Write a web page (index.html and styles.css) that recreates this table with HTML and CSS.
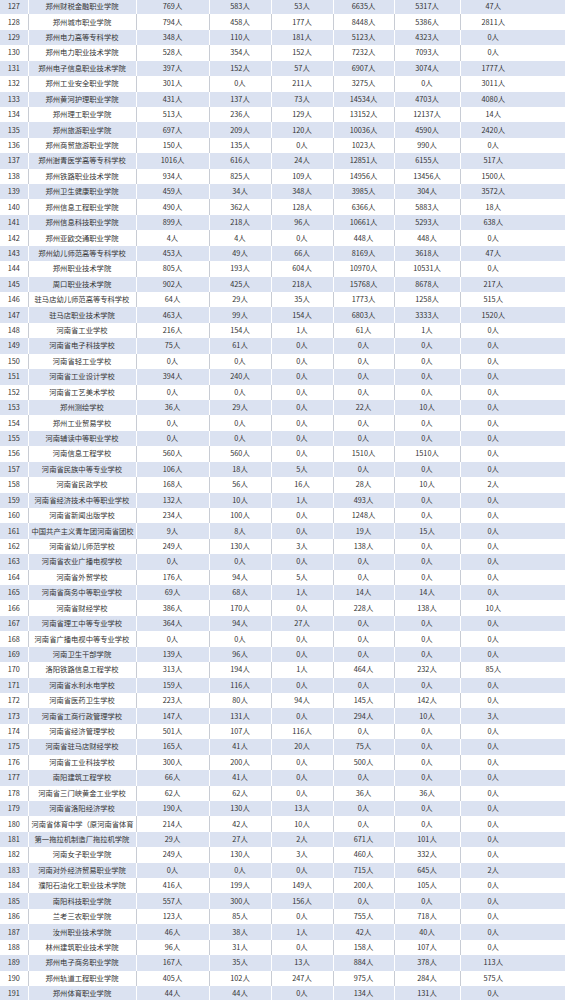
FILE: index.html
```html
<!DOCTYPE html>
<html lang="zh-CN">
<head>
<meta charset="utf-8">
<title>学校统计表</title>
<link rel="stylesheet" href="styles.css">
</head>
<body>
<table class="data">
<colgroup>
<col class="c-no"><col class="c-name"><col class="c-n1"><col class="c-n2"><col class="c-n3"><col class="c-n4"><col class="c-n5"><col class="c-n6"><col class="c-fill">
</colgroup>
<tbody>
<tr class="b"><td>127</td><td>郑州财税金融职业学院</td><td>769人</td><td>583人</td><td>53人</td><td>6635人</td><td>5317人</td><td>47人</td><td class="fill"></td></tr>
<tr><td>128</td><td>郑州城市职业学院</td><td>794人</td><td>458人</td><td>177人</td><td>8448人</td><td>5386人</td><td>2811人</td><td class="fill"></td></tr>
<tr class="b"><td>129</td><td>郑州电力高等专科学校</td><td>348人</td><td>110人</td><td>181人</td><td>5123人</td><td>4323人</td><td>0人</td><td class="fill"></td></tr>
<tr><td>130</td><td>郑州电力职业技术学院</td><td>528人</td><td>354人</td><td>152人</td><td>7232人</td><td>7093人</td><td>0人</td><td class="fill"></td></tr>
<tr class="b"><td>131</td><td>郑州电子信息职业技术学院</td><td>397人</td><td>152人</td><td>57人</td><td>6907人</td><td>3074人</td><td>1777人</td><td class="fill"></td></tr>
<tr><td>132</td><td>郑州工业安全职业学院</td><td>301人</td><td>0人</td><td>211人</td><td>3275人</td><td>0人</td><td>3011人</td><td class="fill"></td></tr>
<tr class="b"><td>133</td><td>郑州黄河护理职业学院</td><td>431人</td><td>137人</td><td>73人</td><td>14534人</td><td>4703人</td><td>4080人</td><td class="fill"></td></tr>
<tr><td>134</td><td>郑州理工职业学院</td><td>513人</td><td>236人</td><td>129人</td><td>13152人</td><td>12137人</td><td>14人</td><td class="fill"></td></tr>
<tr class="b"><td>135</td><td>郑州旅游职业学院</td><td>697人</td><td>209人</td><td>120人</td><td>10036人</td><td>4590人</td><td>2420人</td><td class="fill"></td></tr>
<tr><td>136</td><td>郑州商贸旅游职业学院</td><td>150人</td><td>135人</td><td>0人</td><td>1023人</td><td>990人</td><td>0人</td><td class="fill"></td></tr>
<tr class="b"><td>137</td><td>郑州澍青医学高等专科学校</td><td>1016人</td><td>616人</td><td>24人</td><td>12851人</td><td>6155人</td><td>517人</td><td class="fill"></td></tr>
<tr><td>138</td><td>郑州铁路职业技术学院</td><td>934人</td><td>825人</td><td>109人</td><td>14956人</td><td>13456人</td><td>1500人</td><td class="fill"></td></tr>
<tr class="b"><td>139</td><td>郑州卫生健康职业学院</td><td>459人</td><td>34人</td><td>348人</td><td>3985人</td><td>304人</td><td>3572人</td><td class="fill"></td></tr>
<tr><td>140</td><td>郑州信息工程职业学院</td><td>490人</td><td>362人</td><td>128人</td><td>6366人</td><td>5883人</td><td>18人</td><td class="fill"></td></tr>
<tr class="b"><td>141</td><td>郑州信息科技职业学院</td><td>899人</td><td>218人</td><td>96人</td><td>10661人</td><td>5293人</td><td>638人</td><td class="fill"></td></tr>
<tr><td>142</td><td>郑州亚欧交通职业学院</td><td>4人</td><td>4人</td><td>0人</td><td>448人</td><td>448人</td><td>0人</td><td class="fill"></td></tr>
<tr class="b"><td>143</td><td>郑州幼儿师范高等专科学校</td><td>453人</td><td>49人</td><td>66人</td><td>8169人</td><td>3618人</td><td>47人</td><td class="fill"></td></tr>
<tr><td>144</td><td>郑州职业技术学院</td><td>805人</td><td>193人</td><td>604人</td><td>10970人</td><td>10531人</td><td>0人</td><td class="fill"></td></tr>
<tr class="b"><td>145</td><td>周口职业技术学院</td><td>902人</td><td>425人</td><td>218人</td><td>15768人</td><td>8678人</td><td>217人</td><td class="fill"></td></tr>
<tr><td>146</td><td>驻马店幼儿师范高等专科学校</td><td>64人</td><td>29人</td><td>35人</td><td>1773人</td><td>1258人</td><td>515人</td><td class="fill"></td></tr>
<tr class="b"><td>147</td><td>驻马店职业技术学院</td><td>463人</td><td>99人</td><td>154人</td><td>6803人</td><td>3333人</td><td>1520人</td><td class="fill"></td></tr>
<tr><td>148</td><td>河南省工业学校</td><td>216人</td><td>154人</td><td>1人</td><td>61人</td><td>1人</td><td>0人</td><td class="fill"></td></tr>
<tr class="b"><td>149</td><td>河南省电子科技学校</td><td>75人</td><td>61人</td><td>0人</td><td>0人</td><td>0人</td><td>0人</td><td class="fill"></td></tr>
<tr><td>150</td><td>河南省轻工业学校</td><td>0人</td><td>0人</td><td>0人</td><td>0人</td><td>0人</td><td>0人</td><td class="fill"></td></tr>
<tr class="b"><td>151</td><td>河南省工业设计学校</td><td>394人</td><td>240人</td><td>0人</td><td>0人</td><td>0人</td><td>0人</td><td class="fill"></td></tr>
<tr><td>152</td><td>河南省工艺美术学校</td><td>0人</td><td>0人</td><td>0人</td><td>0人</td><td>0人</td><td>0人</td><td class="fill"></td></tr>
<tr class="b"><td>153</td><td>郑州测绘学校</td><td>36人</td><td>29人</td><td>0人</td><td>22人</td><td>10人</td><td>0人</td><td class="fill"></td></tr>
<tr><td>154</td><td>郑州工业贸易学校</td><td>0人</td><td>0人</td><td>0人</td><td>0人</td><td>0人</td><td>0人</td><td class="fill"></td></tr>
<tr class="b"><td>155</td><td>河南辅读中等职业学校</td><td>0人</td><td>0人</td><td>0人</td><td>0人</td><td>0人</td><td>0人</td><td class="fill"></td></tr>
<tr><td>156</td><td>河南信息工程学校</td><td>560人</td><td>560人</td><td>0人</td><td>1510人</td><td>1510人</td><td>0人</td><td class="fill"></td></tr>
<tr class="b"><td>157</td><td>河南省民族中等专业学校</td><td>106人</td><td>18人</td><td>5人</td><td>0人</td><td>0人</td><td>0人</td><td class="fill"></td></tr>
<tr><td>158</td><td>河南省民政学校</td><td>168人</td><td>56人</td><td>16人</td><td>28人</td><td>10人</td><td>2人</td><td class="fill"></td></tr>
<tr class="b"><td>159</td><td>河南省经济技术中等职业学校</td><td>132人</td><td>10人</td><td>1人</td><td>493人</td><td>0人</td><td>0人</td><td class="fill"></td></tr>
<tr><td>160</td><td>河南省新闻出版学校</td><td>234人</td><td>100人</td><td>0人</td><td>1248人</td><td>0人</td><td>0人</td><td class="fill"></td></tr>
<tr class="b"><td>161</td><td>中国共产主义青年团河南省团校</td><td>9人</td><td>8人</td><td>0人</td><td>19人</td><td>15人</td><td>0人</td><td class="fill"></td></tr>
<tr><td>162</td><td>河南省幼儿师范学校</td><td>249人</td><td>130人</td><td>3人</td><td>138人</td><td>0人</td><td>0人</td><td class="fill"></td></tr>
<tr class="b"><td>163</td><td>河南省农业广播电视学校</td><td>0人</td><td>0人</td><td>0人</td><td>0人</td><td>0人</td><td>0人</td><td class="fill"></td></tr>
<tr><td>164</td><td>河南省外贸学校</td><td>176人</td><td>94人</td><td>5人</td><td>0人</td><td>0人</td><td>0人</td><td class="fill"></td></tr>
<tr class="b"><td>165</td><td>河南省商务中等职业学校</td><td>69人</td><td>68人</td><td>1人</td><td>14人</td><td>14人</td><td>0人</td><td class="fill"></td></tr>
<tr><td>166</td><td>河南省财经学校</td><td>386人</td><td>170人</td><td>0人</td><td>228人</td><td>138人</td><td>10人</td><td class="fill"></td></tr>
<tr class="b"><td>167</td><td>河南省理工中等专业学校</td><td>364人</td><td>94人</td><td>27人</td><td>0人</td><td>0人</td><td>0人</td><td class="fill"></td></tr>
<tr><td>168</td><td>河南省广播电视中等专业学校</td><td>0人</td><td>0人</td><td>0人</td><td>0人</td><td>0人</td><td>0人</td><td class="fill"></td></tr>
<tr class="b"><td>169</td><td>河南卫生干部学院</td><td>139人</td><td>96人</td><td>0人</td><td>0人</td><td>0人</td><td>0人</td><td class="fill"></td></tr>
<tr><td>170</td><td>洛阳铁路信息工程学校</td><td>313人</td><td>194人</td><td>1人</td><td>464人</td><td>232人</td><td>85人</td><td class="fill"></td></tr>
<tr class="b"><td>171</td><td>河南省水利水电学校</td><td>159人</td><td>116人</td><td>0人</td><td>0人</td><td>0人</td><td>0人</td><td class="fill"></td></tr>
<tr><td>172</td><td>河南省医药卫生学校</td><td>223人</td><td>80人</td><td>94人</td><td>145人</td><td>142人</td><td>0人</td><td class="fill"></td></tr>
<tr class="b"><td>173</td><td>河南省工商行政管理学校</td><td>147人</td><td>131人</td><td>0人</td><td>294人</td><td>10人</td><td>3人</td><td class="fill"></td></tr>
<tr><td>174</td><td>河南省经济管理学校</td><td>501人</td><td>107人</td><td>116人</td><td>0人</td><td>0人</td><td>0人</td><td class="fill"></td></tr>
<tr class="b"><td>175</td><td>河南省驻马店财经学校</td><td>165人</td><td>41人</td><td>20人</td><td>75人</td><td>0人</td><td>0人</td><td class="fill"></td></tr>
<tr><td>176</td><td>河南省工业科技学校</td><td>300人</td><td>200人</td><td>0人</td><td>500人</td><td>0人</td><td>0人</td><td class="fill"></td></tr>
<tr class="b"><td>177</td><td>南阳建筑工程学校</td><td>66人</td><td>41人</td><td>0人</td><td>0人</td><td>0人</td><td>0人</td><td class="fill"></td></tr>
<tr><td>178</td><td>河南省三门峡黄金工业学校</td><td>62人</td><td>62人</td><td>0人</td><td>36人</td><td>36人</td><td>0人</td><td class="fill"></td></tr>
<tr class="b"><td>179</td><td>河南省洛阳经济学校</td><td>190人</td><td>130人</td><td>13人</td><td>0人</td><td>0人</td><td>0人</td><td class="fill"></td></tr>
<tr><td>180</td><td>河南省体育中学（原河南省体育</td><td>214人</td><td>42人</td><td>10人</td><td>0人</td><td>0人</td><td>0人</td><td class="fill"></td></tr>
<tr class="b"><td>181</td><td>第一拖拉机制造厂拖拉机学院</td><td>29人</td><td>27人</td><td>2人</td><td>671人</td><td>101人</td><td>0人</td><td class="fill"></td></tr>
<tr><td>182</td><td>河南女子职业学院</td><td>249人</td><td>130人</td><td>3人</td><td>460人</td><td>332人</td><td>0人</td><td class="fill"></td></tr>
<tr class="b"><td>183</td><td>河南对外经济贸易职业学院</td><td>0人</td><td>0人</td><td>0人</td><td>715人</td><td>645人</td><td>2人</td><td class="fill"></td></tr>
<tr><td>184</td><td>濮阳石油化工职业技术学院</td><td>416人</td><td>199人</td><td>149人</td><td>200人</td><td>105人</td><td>0人</td><td class="fill"></td></tr>
<tr class="b"><td>185</td><td>南阳科技职业学院</td><td>557人</td><td>300人</td><td>156人</td><td>0人</td><td>0人</td><td>0人</td><td class="fill"></td></tr>
<tr><td>186</td><td>兰考三农职业学院</td><td>123人</td><td>85人</td><td>0人</td><td>755人</td><td>718人</td><td>0人</td><td class="fill"></td></tr>
<tr class="b"><td>187</td><td>汝州职业技术学院</td><td>46人</td><td>38人</td><td>1人</td><td>42人</td><td>40人</td><td>0人</td><td class="fill"></td></tr>
<tr><td>188</td><td>林州建筑职业技术学院</td><td>96人</td><td>31人</td><td>0人</td><td>158人</td><td>107人</td><td>0人</td><td class="fill"></td></tr>
<tr class="b"><td>189</td><td>郑州电子商务职业学院</td><td>167人</td><td>35人</td><td>13人</td><td>884人</td><td>378人</td><td>113人</td><td class="fill"></td></tr>
<tr><td>190</td><td>郑州轨道工程职业学院</td><td>405人</td><td>102人</td><td>247人</td><td>975人</td><td>284人</td><td>575人</td><td class="fill"></td></tr>
<tr class="b"><td>191</td><td>郑州体育职业学院</td><td>44人</td><td>44人</td><td>0人</td><td>134人</td><td>131人</td><td>0人</td><td class="fill"></td></tr>
</tbody>
</table>
</body>
</html>
```
FILE: styles.css
```css
html, body {
  margin: 0;
  padding: 0;
  background: #ffffff;
}

.data {
  width: 565px;
  margin-top: -1px;
  border-collapse: collapse;
  table-layout: fixed;
  font-family: "Noto Sans CJK SC", "Noto Sans", sans-serif;
  font-size: 7.3px;
  color: #333333;
}

.c-no { width: 28px; }
.c-name { width: 108px; }
.c-n1 { width: 73px; }
.c-n2 { width: 62px; }
.c-n3 { width: 62px; }
.c-n4 { width: 61px; }
.c-n5 { width: 66px; }
.c-n6 { width: 66px; }
.c-fill { width: auto; }

.data tr {
  height: 15.43px;
}

.data td {
  padding: 0 3px;
  height: 15.43px;
  line-height: 15px;
  text-align: center;
  vertical-align: middle;
  white-space: nowrap;
  overflow: hidden;
  border-left: 1px solid #c8ccd4;
}

.data td:first-child,
.data td.fill {
  border-left: none;
}

.data tr.b td {
  background: #dbe2f1;
  border-left-color: #ffffff;
}
```
